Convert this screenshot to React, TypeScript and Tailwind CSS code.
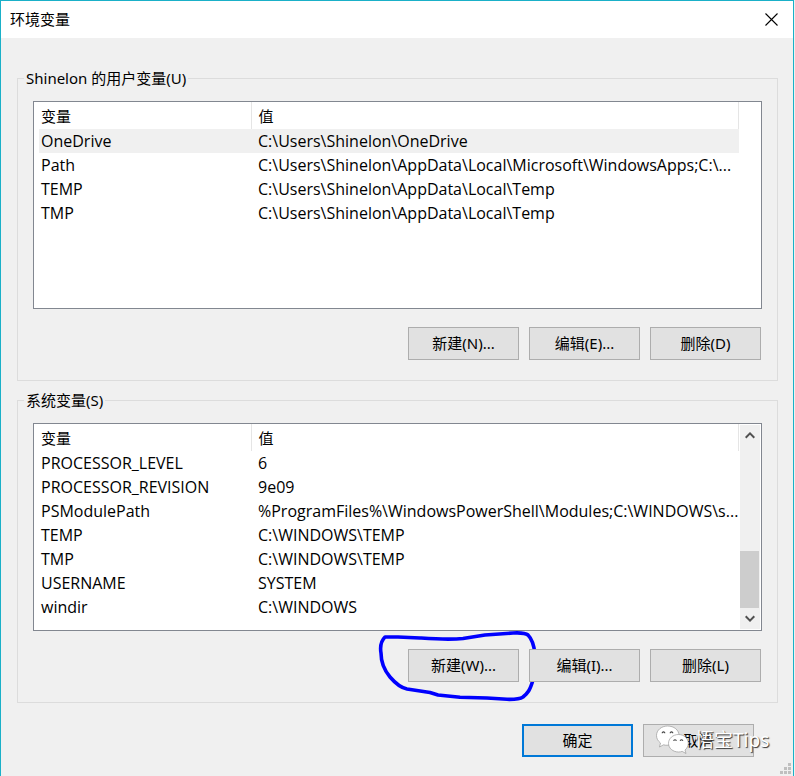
import { clsx } from 'clsx';

interface Variable {
  name: string;
  value: string;
}

interface VariableGroupProps {
  title: string;
  variables: Variable[];
  actions: string[];
  selected?: string;
  scrollable?: boolean;
  circled?: boolean;
}

const userVariables: Variable[] = [
  { name: 'OneDrive', value: 'C:\\Users\\Shinelon\\OneDrive' },
  { name: 'Path', value: 'C:\\Users\\Shinelon\\AppData\\Local\\Microsoft\\WindowsApps;C:\\...' },
  { name: 'TEMP', value: 'C:\\Users\\Shinelon\\AppData\\Local\\Temp' },
  { name: 'TMP', value: 'C:\\Users\\Shinelon\\AppData\\Local\\Temp' },
];

const systemVariables: Variable[] = [
  { name: 'PROCESSOR_LEVEL', value: '6' },
  { name: 'PROCESSOR_REVISION', value: '9e09' },
  { name: 'PSModulePath', value: '%ProgramFiles%\\WindowsPowerShell\\Modules;C:\\WINDOWS\\s...' },
  { name: 'TEMP', value: 'C:\\WINDOWS\\TEMP' },
  { name: 'TMP', value: 'C:\\WINDOWS\\TEMP' },
  { name: 'USERNAME', value: 'SYSTEM' },
  { name: 'windir', value: 'C:\\WINDOWS' },
];

function DialogButton({ label, primary }: { label: string; primary?: boolean }) {
  return (
    <button
      className={clsx(
        'w-[111px] h-[33px] bg-[#e1e1e1] flex items-center justify-center whitespace-nowrap',
        primary ? 'border-2 border-[#0078d7]' : 'border border-[#adadad]',
      )}
    >
      {label}
    </button>
  );
}

function ScrollBar() {
  return (
    <div className="w-5 m-px bg-[#f0f0f0] flex flex-col justify-between">
      <button aria-label="向上滚动" className="h-[21px] flex items-center justify-center">
        <svg width="10" height="7" viewBox="0 0 10 7" fill="none" stroke="#505050" strokeWidth="2">
          <path d="M0.7 5.7L5 1.4L9.3 5.7" />
        </svg>
      </button>
      <div>
        <div className="h-[57px] mr-px bg-[#cdcdcd]" />
        <button aria-label="向下滚动" className="w-full h-[21px] flex items-center justify-center">
          <svg width="10" height="7" viewBox="0 0 10 7" fill="none" stroke="#505050" strokeWidth="2">
            <path d="M0.7 1.3L5 5.6L9.3 1.3" />
          </svg>
        </button>
      </div>
    </div>
  );
}

function PenCircle() {
  return (
    <svg
      className="absolute -left-[31px] -top-5 pointer-events-none"
      width="164"
      height="76"
      viewBox="0 0 164 76"
      fill="none"
      stroke="#0000fe"
      strokeWidth="3.6"
      strokeLinecap="round"
      strokeLinejoin="round"
    >
      <path d="M21 8L8 8C4 12 3 18 4 24C4 34 8 42 13 48C19 55 25 59 30 60L53 63.5L61 66L83 68.3L110 69L130 70.3C138 70.5 143 70 146 68C151 64 153 61 156 51C158 42 159 35 158 25C157 16 155 10 151 6C148 3.500 142 3.700 136 4L108 6L86 9.500C72 11 58 10 43 9L21 8Z" />
    </svg>
  );
}

function VariableGroup({ title, variables, actions, selected, scrollable, circled }: VariableGroupProps) {
  return (
    <fieldset className="border border-[#dcdcdc]">
      <legend className="ml-1.5 px-0.5 h-[23px] leading-[23px]">{title}</legend>
      <div className="px-[15px] pt-[11px] pb-5">
        <div className="h-[208px] bg-white border border-[#828790] flex">
          <div className="flex-1 min-w-0 pl-[5px]">
            <table className="w-full table-fixed border-collapse text-left">
              <thead>
                <tr className="h-[27px]">
                  <th className="w-[212px] p-0 pl-0.5 pt-0.5 leading-[23px] font-normal border-r border-[#e5e5e5]">变量</th>
                  <th className="p-0 pl-[7px] pt-0.5 leading-[23px] font-normal border-r border-[#e5e5e5]">值</th>
                </tr>
              </thead>
              <tbody className="font-['Open_Sans','Noto_Sans_CJK_SC',sans-serif] text-base">
                {variables.map((variable) => (
                  <tr key={variable.name} className={clsx('h-6', variable.name === selected && 'bg-[#f0f0f0]')}>
                    <td className="p-0 pl-0.5 leading-6 whitespace-nowrap">{variable.name}</td>
                    <td className="p-0 pl-[7px] leading-6 whitespace-nowrap">{variable.value}</td>
                  </tr>
                ))}
              </tbody>
            </table>
          </div>
          {scrollable ? <ScrollBar /> : <div className="w-[22px]" />}
        </div>
        <div className="mt-[18px] pr-px flex justify-end gap-2.5">
          {actions.map((action, idx) => (
            <div key={action} className="relative">
              <DialogButton label={action} />
              {circled && idx === 0 && <PenCircle />}
            </div>
          ))}
        </div>
      </div>
    </fieldset>
  );
}

function Watermark() {
  return (
    <div className="absolute left-3 top-0 flex items-center gap-1.5 pointer-events-none">
      <svg width="34" height="33" viewBox="0 0 34 33" fill="#fff" stroke="#999" strokeWidth="0.7">
        <path d="M12.500 2C6.500 2 1.500 6.200 1.500 11.500C1.500 14.500 3 17 5.500 19L4.500 23L8.500 20.800C10 21.300 11.500 21.300 13 21.200C19 21 24 17 24 11.500C24 6 19 2 12.500 2Z" />
        <path d="M23.500 10.500C18 10.500 13.500 14.500 13.500 19.300C13.500 24.200 18 28 23.500 28C24.800 28 26 27.800 27.200 27.400L31 29.500L30 26C32 24.300 33.300 22 33.300 19.300C33.300 14.500 29 10.500 23.500 10.500Z" />
        <g fill="none" stroke="#444" strokeWidth="1.1" strokeLinecap="round">
          <path d="M7.200 8.800Q8.500 7 9.800 8.800M15.200 8.800Q16.500 7 17.800 8.800M18.800 16.400Q20 15 21.200 16.400M25.300 16.400Q26.500 15 27.700 16.400" />
        </g>
      </svg>
      <span className="text-[19px] leading-[33px] text-white whitespace-nowrap [text-shadow:1px_1px_1px_#333]">
        悟宝Tips
      </span>
    </div>
  );
}

function ResizeGrip() {
  return (
    <svg className="absolute right-0.5 bottom-0.5" width="11" height="11" viewBox="0 0 11 11" fill="#bfbfbf">
      <path d="M8 0h3v3h-3zM4 4h3v3h-3zM8 4h3v3h-3zM0 8h3v3h-3zM4 8h3v3h-3zM8 8h3v3h-3z" />
    </svg>
  );
}

export default function App() {
  return (
    <div className="min-h-screen pr-px bg-[#f0f0f0] flex font-['Noto_Sans','Noto_Sans_CJK_SC',sans-serif] text-[15px] text-black">
      <div className="relative flex-1 border border-b-0 border-[#1ab0c8]">
        <header className="h-[37px] pl-[9px] pr-[15px] bg-white flex items-center justify-between">
          <h1>环境变量</h1>
          <button aria-label="关闭">
            <svg width="13" height="13" viewBox="0 0 13 13" fill="none" stroke="#000" strokeWidth="1.1">
              <path d="M0.500 0.500L12.500 12.500M12.500 0.500L0.500 12.500" />
            </svg>
          </button>
        </header>

        <main className="pl-4 pr-[15px] pt-[29px] flex flex-col gap-2">
          <VariableGroup
            title="Shinelon 的用户变量(U)"
            variables={userVariables}
            actions={['新建(N)...', '编辑(E)...', '删除(D)']}
            selected="OneDrive"
          />
          <VariableGroup
            title="系统变量(S)"
            variables={systemVariables}
            actions={['新建(W)...', '编辑(I)...', '删除(L)']}
            scrollable
            circled
          />
        </main>

        <footer className="mt-[21px] pr-[39px] flex justify-end gap-2.5">
          <DialogButton label="确定" primary />
          <div className="relative">
            <DialogButton label="取消" />
            <Watermark />
          </div>
        </footer>
        <ResizeGrip />
      </div>
    </div>
  );
}
